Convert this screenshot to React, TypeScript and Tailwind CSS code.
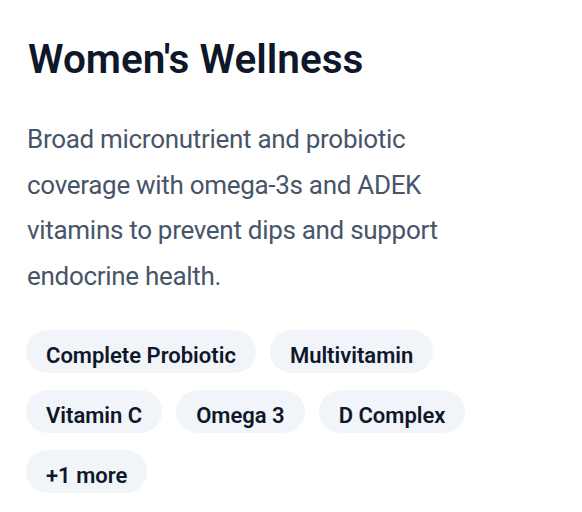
export default function App() {
  const tags = ['Complete Probiotic', 'Multivitamin', 'Vitamin C', 'Omega 3', 'D Complex', '+1 more']

  return (
    <div className="min-h-screen bg-white px-[26px] pt-[33px] font-['Roboto',sans-serif]">
      <h2 className="pl-[2px] text-[40.5px] leading-[52px] font-semibold text-[#0f172a]">Women's Wellness</h2>

      <p className="mt-[32px] max-w-[460px] pl-[1px] text-[26px] leading-[45.5px] tracking-[-0.3px] text-[#475569]">
        Broad micronutrient and probiotic coverage with omega-3s and ADEK vitamins to prevent dips and support
        endocrine health.
      </p>

      {/* tags */}
      <div className="mt-[31px] flex flex-wrap gap-x-[14px] gap-y-[17px]">
        {tags.map((tag) => (
          <span
            key={tag}
            className="flex h-[43px] items-center rounded-full bg-[#f1f5f9] px-[20px] pt-[7px] text-[22px] font-semibold text-[#0f172a]"
          >
            {tag}
          </span>
        ))}
      </div>
    </div>
  )
}
